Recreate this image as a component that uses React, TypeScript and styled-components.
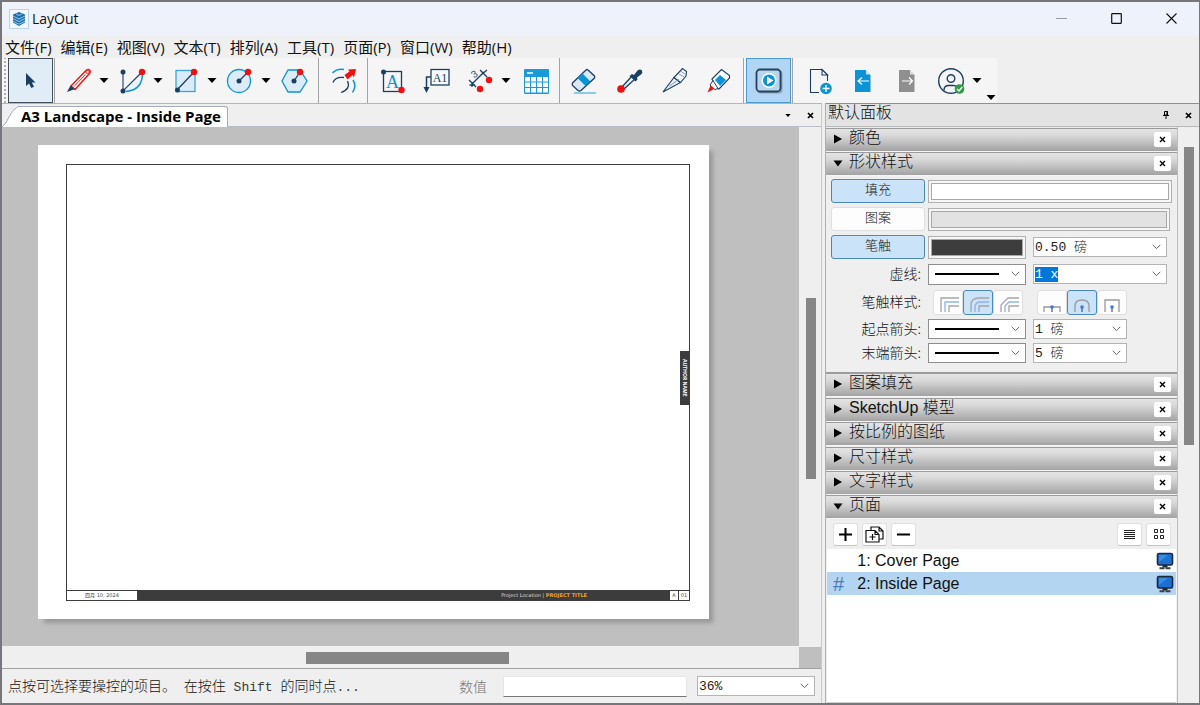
import React, { useEffect, useRef } from "react";
import styled, { createGlobalStyle, css } from "styled-components";

const NAVY = "#1b3f63";
const BLUE = "#0a94d6";
const RED = "#f01010";
const PALE = "#dcebf8";
const UI = `"Open Sans", "Noto Sans CJK SC", sans-serif`;
const SONG = `"Liberation Mono", "Noto Sans CJK SC", monospace`;
const ARIAL = `"Liberation Sans", "Noto Sans CJK SC", sans-serif`;

const GlobalStyle = createGlobalStyle`
  *, *::before, *::after { box-sizing: border-box; }
  body { margin: 0; background: #efefef; color: #111; font-family: ${UI}; font-size: 14px; }
  button, input, select { font: inherit; color: inherit; margin: 0; padding: 0; border-radius: 0; }
  button { cursor: default; border: 0; background: none; }
  svg { display: block; flex: none; }
  ul { list-style: none; margin: 0; padding: 0; }
  h2 { margin: 0; font-size: 16px; font-weight: 300; }
`;

/* ---------- window frame ---------- */

const Window = styled.div`
  min-height: 100vh;
  display: flex;
  flex-direction: column;
  border: 2px solid #77777b;
  border-right-width: 1px;
  background: #efefef;
`;

const TitleBar = styled.header`
  height: 33px;
  display: flex;
  align-items: center;
  padding-left: 7px;
  background: #eef2fa;
`;

const AppTitle = styled.span`
  flex: 1;
  padding-left: 3px;
  font-size: 14px;
  line-height: 20px;
`;

const WindowButton = styled.button`
  width: 55px;
  height: 33px;
  display: flex;
  align-items: center;
  justify-content: center;
`;

const MenuBar = styled.nav`
  height: 23px;
  display: flex;
  align-items: center;
  gap: 9px;
  padding-left: 3px;
  background: #efefef;
`;

const MenuItem = styled.button`
  font-size: 15px;
  line-height: 22px;
  white-space: nowrap;
`;

/* ---------- toolbar ---------- */

const Toolbar = styled.div`
  height: 45px;
  display: flex;
  align-self: flex-start;
  background: #f5f5f5;
`;

const Grip = styled.div`
  width: 6px;
  background: radial-gradient(circle at 2px 2px, #b0b0b0 1px, transparent 1px) 1px 2px / 4px 4px;
`;

const ToolGroup = styled.div<{ $gap?: number; $left?: number; $right?: number; $last?: boolean }>`
  display: flex;
  gap: ${(p) => p.$gap ?? 0}px;
  padding: 0 ${(p) => p.$right ?? 0}px 0 ${(p) => p.$left ?? 0}px;
  border-right: ${(p) => (p.$last ? "0" : "1px solid #a3a3a3")};
`;

const ToolButton = styled.button<{ $state?: "picked" | "active" }>`
  width: 38px;
  height: 45px;
  display: flex;
  align-items: center;
  justify-content: center;
  ${(p) =>
    p.$state &&
    css`
      width: 45px;
      border: 1px solid ${p.$state === "picked" ? "#42505c" : "#4a9ad4"};
      background: ${p.$state === "picked" ? "#e0ecf6" : "#b1d5f2"};
    `}
`;

const Split = styled.div`
  display: flex;
`;

const CaretButton = styled.button`
  width: 12px;
  height: 45px;
  display: flex;
  align-items: center;
  justify-content: center;
`;

const OverflowButton = styled(CaretButton)`
  align-items: flex-end;
  padding-bottom: 3px;
  margin: 0 0 0 2px;
`;

/* ---------- work area ---------- */

const Main = styled.main`
  flex: 1;
  display: grid;
  grid-template-columns: minmax(0, 1fr) 374px;
`;

const Workspace = styled.section`
  display: flex;
  flex-direction: column;
  min-width: 0;
  border-top: 1px solid #b5b5b5;
  border-right: 1px solid #c9c9c9;
  margin-right: 3px;
`;

const TabBar = styled.div`
  height: 23px;
  display: flex;
  align-items: flex-end;
  background: #efefef;
  border-bottom: 1px solid #b9bdc6;
`;

const TabShape = styled.button`
  display: flex;
  align-items: stretch;
  height: 21px;
  margin-bottom: -1px;
`;

const TabLabel = styled.span`
  background: #fff;
  border: 1px solid #a3abc0;
  border-width: 1px 1px 0 0;
  border-radius: 0 3px 0 0;
  padding: 0 6px 0 0;
  font-size: 15px;
  line-height: 18px;
  font-weight: 700;
  color: #000;
  white-space: nowrap;
`;

const TabTools = styled.div`
  flex: 1;
  height: 22px;
  display: flex;
  align-items: center;
  justify-content: flex-end;
`;

const SmallButton = styled.button`
  width: 22px;
  height: 20px;
  display: flex;
  align-items: center;
  justify-content: center;
`;

const CanvasRow = styled.div`
  flex: 1;
  display: flex;
`;

const Canvas = styled.div`
  flex: 1;
  display: flex;
  background: #bfbfbf;
  padding: 18px 90px 27px 36px;
`;

const Paper = styled.div`
  flex: 1;
  display: flex;
  background: #fff;
  padding: 19px 19px 18px 28px;
  box-shadow: 5px 5px 4px -1px #999;
`;

const Sheet = styled.div`
  flex: 1;
  display: flex;
  flex-direction: column;
  border: 1px solid #3d3d3d;
`;

const DrawingArea = styled.div`
  flex: 1;
  display: flex;
  align-items: center;
  justify-content: flex-end;
`;

const AuthorTag = styled.div`
  height: 54px;
  width: 9px;
  display: flex;
  align-items: center;
  justify-content: center;
  writing-mode: vertical-rl;
  background: #3c3c3c;
  color: #fff;
  font: 700 5px/9px "Open Sans", sans-serif;
  white-space: nowrap;
`;

const TitleStrip = styled.div`
  height: 10px;
  display: grid;
  grid-template-columns: 71px minmax(0, 1fr) 9px 10px;
  border-top: 1px solid #3d3d3d;
  font: 5px/8px "DejaVu Sans", "Noto Sans CJK SC", sans-serif;
  text-align: center;
  color: #444;
`;

const StripBar = styled.div`
  background: #3c3c3c;
  color: #ddd;
  padding-right: 83px;
  text-align: right;
`;

const ProjectTitle = styled.b`
  color: #f0a030;
`;

const StripCell = styled.div`
  border-right: 1px solid #3d3d3d;
  &:last-child {
    border-right: 0;
  }
`;

const VerticalTrack = styled.div<{ $pad: string; $width: number }>`
  width: ${(p) => p.$width}px;
  padding: ${(p) => p.$pad};
  background: #efefef;
`;

const VerticalThumb = styled.div<{ $size: number }>`
  height: ${(p) => p.$size}px;
  width: 10px;
  background: #868686;
`;

const HorizontalScroll = styled.div`
  height: 23px;
  display: flex;
  background: #efefef;
  border-bottom: 1px solid #a2a2a2;
`;

const HorizontalTrack = styled.div`
  flex: 1;
  padding: 6px 0 0 304px;
`;

const HorizontalThumb = styled.div`
  width: 203px;
  height: 12px;
  background: #868686;
`;

const ScrollCorner = styled.div`
  width: 22px;
  background: #bfbfbf;
  border-top: 1px solid #efefef;
`;

const StatusBar = styled.footer`
  height: 34px;
  display: flex;
  align-items: center;
  padding: 0 6px 0 6px;
  font-family: ${SONG};
  font-size: 14px;
  font-weight: 300;
  line-height: 20px;
`;

const StatusText = styled.span`
  flex: 1;
  padding-top: 3px;
  white-space: nowrap;
`;

const Half = styled.span`
  font-size: 13px;
  color: #3a3a3a;
  white-space: pre;
`;

const MeasureLabel = styled.label`
  color: #777;
  padding-top: 3px;
  margin-right: 16px;
`;

const MeasureInput = styled.input`
  width: 184px;
  height: 21px;
  border: 1px solid #e6e6e6;
  border-bottom-color: #777;
  background: #fff;
  margin-right: 10px;
`;

/* ---------- form controls ---------- */

const Field = styled.div<{ $width?: number; $height?: number }>`
  position: relative;
  flex: none;
  width: ${(p) => p.$width ?? 134}px;
  height: ${(p) => p.$height ?? 20}px;
`;

const fieldLook = css`
  width: 100%;
  height: 100%;
  display: block;
  appearance: none;
  border: 1px solid #b4b4b4;
  background: #fff;
  padding: 0 20px 0 1px;
  font-family: ${SONG};
  font-size: 13px;
  font-weight: 300;
  color: #222;
  outline: none;
`;

const Select = styled.select<{ $line?: boolean }>`
  ${fieldLook}
  ${(p) =>
    p.$line &&
    css`
      border-color: #8e8e8e;
      background: #fff linear-gradient(#000, #000) 6px 50% / calc(100% - 32px) 2px no-repeat;
    `}
`;

const ComboInput = styled.input`
  ${fieldLook}
  &::selection {
    background: #0078d7;
    color: #fff;
  }
`;

const Chevron = styled.svg`
  position: absolute;
  right: 6px;
  top: 50%;
  margin-top: -3px;
  pointer-events: none;
`;

/* ---------- tray ---------- */

const Tray = styled.aside`
  display: flex;
  flex-direction: column;
  border-left: 1px solid #b0b0b0;
`;

const TrayHeader = styled.div`
  height: 24px;
  display: flex;
  align-items: center;
  padding-left: 2px;
  background: #e3e3e3;
  border-top: 1px solid #8f8f8f;
  border-bottom: 1px solid #b8b8b8;
`;

const TrayTitle = styled.h2`
  flex: 1;
  font-family: ${ARIAL};
  line-height: 20px;
  padding-bottom: 4px;
`;

const TrayBody = styled.div`
  flex: 1;
  display: flex;
`;

const Sections = styled.div`
  flex: 1;
  display: flex;
  flex-direction: column;
  border-right: 1px solid #bdbdbd;
`;

const SectionHeader = styled.div<{ $apart?: boolean }>`
  height: 24px;
  margin-top: ${(p) => (p.$apart ? 1 : 0)}px;
  display: flex;
  align-items: center;
  padding: 0 6px 2px 7px;
  gap: 6px;
  background: linear-gradient(#e4e4e4, #d8d8d8 30%, #a3a3a3);
  border-top: 1px solid #9c9c9c;
  border-bottom: 1px solid #f4f4f4;
`;

const SectionTitle = styled.h2`
  flex: 1;
  font-family: ${ARIAL};
  line-height: 20px;
  padding-bottom: 2px;
`;

const CloseButton = styled.button`
  width: 17px;
  height: 15px;
  display: flex;
  align-items: center;
  justify-content: center;
  background: #fff;
  border-radius: 2px;
`;

const StyleForm = styled.form`
  display: flex;
  flex-direction: column;
  gap: 4px;
  padding: 3px 5px 9px;
  border-bottom: 1px solid #9c9c9c;
`;

const FormRow = styled.div<{ $height?: number }>`
  height: ${(p) => p.$height ?? 24}px;
  display: flex;
  align-items: center;
`;

const ToggleButton = styled.button<{ $on?: boolean }>`
  width: 94px;
  height: 24px;
  margin-right: 3px;
  border: 1px solid ${(p) => (p.$on ? "#4a87bb" : "#dedede")};
  border-radius: 3px;
  background: ${(p) => (p.$on ? "#cbe3f8" : "#fdfdfd")};
  font-family: ${SONG};
  font-size: 13px;
  font-weight: 300;
  line-height: 20px;
`;

const Swatch = styled.button<{ $color: string; $width?: number; $inset?: number }>`
  ${(p) => (p.$width ? `width: ${p.$width}px;` : "flex: 1;")}
  height: 23px;
  margin-right: ${(p) => p.$inset ?? 0}px;
  padding: 2px;
  border: 1px solid #b0b0b0;
  background: #f6f6f6;
  &::before {
    content: "";
    display: block;
    height: 100%;
    border: 1px solid #a8a8a8;
    background: ${(p) => p.$color};
  }
`;

const RowLabel = styled.label`
  width: 94px;
  margin-right: 3px;
  padding: 0 4px 2px 0;
  text-align: right;
  font-family: "Noto Sans CJK SC", sans-serif;
  font-size: 14px;
  font-weight: 300;
  line-height: 20px;
  white-space: nowrap;
`;

const Spacer = styled.div`
  width: 7px;
`;

const Segments = styled.div<{ $left: number }>`
  display: flex;
  margin-left: ${(p) => p.$left}px;
`;

const Segment = styled.button<{ $on?: boolean }>`
  width: 30px;
  height: 25px;
  display: flex;
  align-items: center;
  justify-content: center;
  padding: 2px 0 0 2px;
  border: 1px solid ${(p) => (p.$on ? "#4a87bb" : "#dedede")};
  border-radius: 3px;
  background: ${(p) => (p.$on ? "#cbe3f8" : "#fdfdfd")};
`;

const PageTools = styled.div`
  height: 30px;
  display: flex;
  align-items: center;
  gap: 4px;
  padding: 0 6px 0 7px;
`;

const PageButton = styled.button<{ $push?: boolean }>`
  width: 25px;
  height: 23px;
  display: flex;
  align-items: center;
  justify-content: center;
  background: #fff;
  border: 1px solid #e0e0e0;
  border-bottom-color: #c4c4c4;
  border-radius: 3px;
  margin-left: ${(p) => (p.$push ? "auto" : "0")};
`;

const PageList = styled.ul`
  flex: 1;
  margin: 0 1px;
  background: #fff;
  border-bottom: 1px solid #d0d0d0;
`;

const PageRow = styled.li<{ $selected?: boolean }>`
  height: 23px;
  display: flex;
  align-items: center;
  padding: 0 2px 0 6px;
  font: 16px/22px ${ARIAL};
  background: ${(p) => (p.$selected ? "#b3d5f1" : "#fff")};
`;

const PageMark = styled.span`
  width: 20px;
  color: #4a7cc0;
  font-size: 20px;
`;

const PageNumber = styled.span`
  width: 22px;
  text-align: center;
`;

const PageName = styled.span`
  flex: 1;
`;

/* ---------- drawings ---------- */

const Glyph = ({ children }: { children: React.ReactNode }) => (
  <svg width="36" height="36" viewBox="-18 -18 36 36" fill="none" strokeWidth="1.3" aria-hidden>
    {children}
  </svg>
);

const Dot = ({ x, y, red }: { x: number; y: number; red?: boolean }) => (
  <circle cx={x} cy={y} r={red ? 3.2 : 2.5} fill={red ? RED : NAVY} />
);

const Caret = ({ w = 10, h = 5 }: { w?: number; h?: number }) => (
  <svg width={w} height={h} viewBox="0 0 10 5" aria-hidden>
    <path d="M0.5 0H9.5L5 5Z" fill="#000" />
  </svg>
);

const Cross = ({ size = 7, width = 1.7 }: { size?: number; width?: number }) => (
  <svg width={size} height={size} viewBox="0 0 7 7" aria-hidden>
    <path d="M1 1L6 6M6 1L1 6" stroke="#000" strokeWidth={width} />
  </svg>
);

const Down = () => (
  <Chevron width="9" height="6" viewBox="0 0 9 6" fill="none" aria-hidden>
    <path d="M0.7 0.8L4.5 4.6L8.3 0.8" stroke="#666" strokeWidth="1" />
  </Chevron>
);

const Logo = () => (
  <svg width="20" height="20" viewBox="0 0 20 20" aria-hidden>
    <rect x="0.5" y="0.5" width="19" height="19" fill="#f4f8fc" stroke="#bcd5e8" />
    <path d="M4 5.500L10 3L16 5.500V13.500L10 17L4 13.500Z" fill="#1a6fae" />
    <path
      d="M4 7L10 10L16 7M4 9.6L10 12.6L16 9.6M4 12.2L10 15.2L16 12.2M7 5L10 6.5L13 5"
      fill="none"
      stroke="#b9dcf2"
      strokeWidth="0.8"
    />
  </svg>
);

const SelectIcon = () => (
  <Glyph>
    <path d="M-5 -8V5L-2 2.500L0.300 7L3 5.800L0.800 1.500H4.500Z" fill={NAVY} />
  </Glyph>
);

const PencilIcon = () => (
  <Glyph>
    <path d="M-8 5L7 -10.500Q9 -12.500 10.500 -11Q12 -9.500 10.500 -7.500L-4 8.500Z" fill="#fff" stroke={RED} strokeWidth="1.400" />
    <path d="M-5 5.500L6.500 -6.500" stroke={RED} strokeWidth="0.900" />
    <circle cx="8.500" cy="-9" r="1.600" fill="#fff" stroke={RED} strokeWidth="0.900" />
    <path d="M-12 11L-8.500 4.500L-4 8Z" fill={NAVY} />
  </Glyph>
);

const ArcIcon = () => (
  <Glyph>
    <path d="M9 -9Q9 10 -10 10Z" fill="#eaf3fa" />
    <path d="M9.500 -9Q10 9 -7 10.500" stroke={BLUE} strokeWidth="1.500" />
    <path d="M-10 -9V10L9 -9" stroke={NAVY} strokeWidth="1.100" />
    <Dot x={-10} y={-9} />
    <Dot x={-10} y={10} />
    <Dot x={9} y={-9} red />
  </Glyph>
);

const RectIcon = () => (
  <Glyph>
    <rect x="-11" y="-10.500" width="19" height="21" fill={PALE} stroke="#3aa5dc" />
    <path d="M-10 9L7 -9" stroke={NAVY} />
    <Dot x={-9.5} y={9} />
    <Dot x={7} y={-9} red />
  </Glyph>
);

const CircleIcon = () => (
  <Glyph>
    <circle cx="-2" cy="0" r="11.500" fill={PALE} stroke={BLUE} />
    <path d="M-2 0L7 -9" stroke={NAVY} />
    <Dot x={-2} y={0} />
    <Dot x={7} y={-9} red />
  </Glyph>
);

const PolygonIcon = () => (
  <Glyph>
    <path d="M-13 0L-7 -11H5L12 0L5 11H-7Z" fill={PALE} stroke={BLUE} />
    <path d="M-1 0L5 -9" stroke={NAVY} />
    <Dot x={-1} y={0} />
    <Dot x={5} y={-9} red />
  </Glyph>
);

const OffsetIcon = () => (
  <Glyph>
    <path d="M-11.500 -8Q-7 -12.500 0 -11.500M9 -1Q13 5 8.500 11.500" stroke={BLUE} strokeWidth="1.500" />
    <path d="M-11 1.500Q-9 -4.500 0 -3.500M3.500 0Q7 8 -3 11.500" stroke={NAVY} />
    <path d="M0.500 -6L5.500 -9.500L4 -11.500L12 -12L10 -3.500L8.500 -6L3.500 -1.500Z" fill={RED} />
  </Glyph>
);

const TextIcon = () => (
  <Glyph>
    <rect x="-9.500" y="-9.500" width="18" height="20" stroke={NAVY} />
    <text x="-0.500" y="6.500" textAnchor="middle" fontFamily="Liberation Serif, serif" fontSize="18" fill={BLUE}>
      A
    </text>
    <Dot x={-9.5} y={-9} />
    <Dot x={8.500} y={9} red />
  </Glyph>
);

const LabelIcon = () => (
  <Glyph>
    <path d="M-6 -4H-10.500V7" stroke={NAVY} strokeWidth="1.500" />
    <path d="M-13.500 6H-7.500L-10.500 12Z" fill={NAVY} />
    <rect x="-6" y="-11.500" width="18" height="15.500" fill="#f8fafc" stroke={NAVY} />
    <text x="3" y="0.500" textAnchor="middle" fontFamily="Liberation Serif, serif" fontSize="12" fill={NAVY}>
      A1
    </text>
  </Glyph>
);

const DimensionIcon = () => (
  <Glyph>
    <path d="M-9 3L3 -9M-12 -1L-5 6M-11.500 4H-6M-1 -11L6 -4M0 -6L6 -11M-9 6V1" stroke={NAVY} />
    <text x="-9" y="-3" fontFamily="Liberation Sans, sans-serif" fontSize="10" fill={NAVY} transform="rotate(-35 -7 -6)">
      3
    </text>
    <Dot x={8} y={-1} red />
    <Dot x={-1} y={8} red />
  </Glyph>
);

const TableIcon = () => (
  <Glyph>
    <rect x="-13" y="-12" width="25" height="25" rx="1" fill="#1a9bd8" />
    <path d="M-10 -8H-4" stroke="#fff" strokeWidth="1.500" />
    {[0, 1, 2].map((r) =>
      [0, 1, 2, 3].map((c) => (
        <rect key={`${r}${c}`} x={-12 + c * 6} y={-4 + r * 5.500} width="5" height="4.500" fill="#fff" />
      )),
    )}
  </Glyph>
);

const EraserIcon = () => (
  <Glyph>
    <path d="M-10 12H12" stroke="#4fb6e0" />
    <path d="M-11.500 2L2 -11Q3 -12 4 -11L10.500 -5Q11 -4 10.500 -3L-3 9.500Q-4.500 10.500 -6 9.500L-11.500 4.500Q-12 3 -11.500 2Z" fill="#dde8f5" stroke={NAVY} />
    <path d="M-6.500 -3L1.500 5L6.500 0.500L-1.500 -7.500Z" fill={BLUE} />
  </Glyph>
);

const DropperIcon = () => (
  <Glyph>
    <path d="M-7 6L3 -5L6 -2L-5 8Z" fill="#e6eef6" stroke={NAVY} />
    <path d="M0.500 -5L3 -7L5 -6L8.500 -10.500Q11 -12.500 13 -10.500Q14 -8.500 12 -6.500L8 -3.500L8.500 -1.500L6.500 0.500Z" fill={NAVY} />
    <circle cx="-8" cy="8" r="3.800" fill={RED} />
  </Glyph>
);

const KnifeIcon = () => (
  <Glyph>
    <path d="M-11 11L0 -3.500L6.500 1.500Z" fill="#e8eff6" stroke={NAVY} strokeWidth="1.100" />
    <path d="M0 -3.500L8.500 -12.500L12.500 -9.500L12 -5L6.500 1.500Z" fill="#f5f8fb" stroke={NAVY} strokeWidth="1.100" />
    <path d="M-5 5.500L5 -2M5 -7L10.500 -4M7 -9.500L11.500 -6.500" stroke="#7d95ae" strokeWidth="0.900" />
  </Glyph>
);

const StyleIcon = () => (
  <Glyph>
    <path d="M-7 -2L2.500 -11.500L10.500 -5.500V-3L0 8L-3 7Z" fill="#fff" stroke={NAVY} strokeWidth="1.100" />
    <path d="M-4 -1L1 -6L7 -1L1 5Z" fill={BLUE} />
    <path d="M-6 -0.500L-9 4L-4 8.500L-1 7.500Z" fill="#fff" stroke={NAVY} strokeWidth="1" />
    <path d="M-8.500 4.500L-11.500 11.500L-5 8Z" fill={RED} />
  </Glyph>
);

const PresentIcon = () => (
  <Glyph>
    <rect x="-12" y="-11" width="25.500" height="23.500" rx="3.500" fill="#8ba3b8" />
    <rect x="-12.500" y="-11.500" width="24" height="22" rx="3.500" fill="#b7d5ec" stroke="#24425f" strokeWidth="1.800" />
    <circle cx="0" cy="-0.500" r="7.500" fill="#fff" />
    <circle cx="0" cy="-0.500" r="6" fill={BLUE} />
    <path d="M-2 -4.500V3.500L4.500 -0.500Z" fill="#fff" />
  </Glyph>
);

const AddPageIcon = () => (
  <Glyph>
    <path d="M-1 11.500H-9.500V-11.500H2L7.500 -6V0" stroke={NAVY} strokeWidth="1.100" />
    <path d="M2 -11.500V-6H7.500Z" fill="#fff" stroke={NAVY} strokeWidth="1.100" />
    <circle cx="6" cy="7.500" r="5.800" fill={BLUE} />
    <path d="M2.500 7.500H9.500M6 4V11" stroke="#fff" />
  </Glyph>
);

const TurnIcon = ({ color, back }: { color: string; back?: boolean }) => (
  <Glyph>
    <path d="M-9 -11H1.500L6.500 -6V11H-9Z" fill={color} />
    <path d="M2 -11V-6.500H6.500Z" fill="#dcdcdc" />
    <path d={back ? "M5 0H-6M-2 -3.500L-6 0L-2 3.500" : "M-6 0H4.500M1 -3.500L4.500 0L1 3.500"} stroke="#fff" strokeWidth="1.200" />
  </Glyph>
);

const UserIcon = () => (
  <Glyph>
    <circle cx="-1" cy="0" r="12.300" stroke={NAVY} strokeWidth="1.400" />
    <circle cx="-1" cy="-2.500" r="3.800" stroke={NAVY} strokeWidth="1.400" />
    <path d="M-8 9.500Q-8 4.500 -3.500 4.500H1.500Q4 4.500 5 6" stroke={NAVY} strokeWidth="1.400" />
    <circle cx="7.500" cy="8" r="4.800" fill="#2f9a48" />
    <path d="M5 8L7 10L10.200 6" stroke="#fff" strokeWidth="1.400" />
  </Glyph>
);

const Pin = () => (
  <svg width="6" height="8" viewBox="0 0 6 8" fill="none" aria-hidden>
    <path d="M1.500 0.500H4.500V4H1.500ZM0 4.500H6M3 4V8M4 0V4" stroke="#000" />
  </svg>
);

const JoinIcon = ({ kind }: { kind: "miter" | "round" | "bevel" }) => {
  const outer = {
    miter: "M3 18V4H21",
    round: "M3 18V11Q3 4 11 4H21",
    bevel: "M3 18V11L10 4H21",
  }[kind];
  const mid = {
    miter: "M7 18V8H21",
    round: "M7 18V13Q7 8 13 8H21",
    bevel: "M7 18V12L11 8H21",
  }[kind];
  return (
    <svg width="22" height="19" viewBox="0 0 22 19" fill="none" aria-hidden>
      <path d={outer} stroke="#a5a5a5" strokeWidth="1.300" />
      <path d={mid} stroke="#8eb2ea" strokeWidth="1.300" />
      <path d="M11 18V12H21" stroke="#a5a5a5" strokeWidth="1.300" />
    </svg>
  );
};

const CapIcon = ({ kind }: { kind: "flat" | "round" | "square" }) => {
  const outer = {
    flat: "M2 18V13H18V18",
    round: "M3 18V12Q3 6 10 6Q17 6 17 12V18",
    square: "M3 18V6H17V18",
  }[kind];
  return (
    <svg width="22" height="19" viewBox="0 0 22 19" fill="none" aria-hidden>
      <path d={outer} stroke="#999" strokeWidth="1.300" />
      <path d="M10 13V18" stroke="#333" />
      <circle cx="10" cy="13" r="1.800" fill="#3a7bd5" />
    </svg>
  );
};

const Monitor = () => (
  <svg width="18" height="18" viewBox="0 0 18 18" aria-label="演示">
    <rect x="1.500" y="1.500" width="15" height="11.500" rx="1.500" fill="#1d6fd0" stroke="#1c2a3c" strokeWidth="1.600" />
    <path d="M3 10L12 3H3Z" fill="#3d8be6" />
    <path d="M6.500 13H11.500V15.500H6.500Z" fill="#1c2a3c" />
    <path d="M3.500 16.200H14.500" stroke="#3d3d42" strokeWidth="2" strokeDasharray="5 1" />
  </svg>
);

/* ---------- pieces ---------- */

const Tool = ({ label, children }: { label: string; children: React.ReactNode }) => (
  <ToolButton aria-label={label}>{children}</ToolButton>
);

const SplitTool = ({ label, children }: { label: string; children: React.ReactNode }) => (
  <Split>
    <Tool label={label}>{children}</Tool>
    <CaretButton aria-label={`${label} 选项`}>
      <Caret />
    </CaretButton>
  </Split>
);

const Section = ({ title, open, apart }: { title: string; open?: boolean; apart?: boolean }) => (
  <SectionHeader $apart={apart}>
    <svg width="10" height="10" viewBox="0 0 10 10" aria-hidden>
      <path d={open ? "M0.500 2.500H9.500L5 8.500Z" : "M1 0.500L9 5L1 9.500Z"} fill="#000" />
    </svg>
    <SectionTitle>{title}</SectionTitle>
    <CloseButton aria-label={`关闭 ${title}`}>
      <Cross size={7} width={1.4} />
    </CloseButton>
  </SectionHeader>
);

const LineSelect = ({ id, height }: { id: string; height?: number }) => (
  <Field $width={98} $height={height}>
    <Select $line id={id}>
      <option value="solid"></option>
    </Select>
    <Down />
  </Field>
);

const ValueSelect = ({ label, value, width }: { label: string; value: string; width?: number }) => (
  <Field $width={width}>
    <Select aria-label={label}>
      <option>{value}</option>
    </Select>
    <Down />
  </Field>
);

const ScaleCombo = () => {
  const ref = useRef<HTMLInputElement>(null);
  useEffect(() => {
    ref.current?.focus();
    ref.current?.select();
  }, []);
  return (
    <Field>
      <ComboInput ref={ref} aria-label="虚线比例" defaultValue="1 x" />
      <Down />
    </Field>
  );
};

const menus = ["文件(F)", "编辑(E)", "视图(V)", "文本(T)", "排列(A)", "工具(T)", "页面(P)", "窗口(W)", "帮助(H)"];
const closedSections = ["图案填充", "SketchUp 模型", "按比例的图纸", "尺寸样式", "文字样式"];
const pages = [
  { n: 1, name: "Cover Page" },
  { n: 2, name: "Inside Page", selected: true },
];

export default function App() {
  return (
    <Window>
      <GlobalStyle />
      <TitleBar>
        <Logo />
        <AppTitle>LayOut</AppTitle>
        <WindowButton aria-label="最小化">
          <svg width="11" height="11" viewBox="0 0 11 11">
            <path d="M0 5.500H11" stroke="#9a9ea8" />
          </svg>
        </WindowButton>
        <WindowButton aria-label="最大化">
          <svg width="11" height="11" viewBox="0 0 11 11">
            <rect x="0.700" y="0.700" width="9.600" height="9.600" rx="0.500" fill="none" stroke="#111" strokeWidth="1.200" />
          </svg>
        </WindowButton>
        <WindowButton aria-label="关闭">
          <svg width="11" height="11" viewBox="0 0 11 11">
            <path d="M0.500 0.500L10.500 10.500M10.500 0.500L0.500 10.500" stroke="#111" strokeWidth="1.100" />
          </svg>
        </WindowButton>
      </TitleBar>

      <MenuBar>
        {menus.map((m) => (
          <MenuItem key={m}>{m}</MenuItem>
        ))}
      </MenuBar>

      <Toolbar role="toolbar">
        <Grip />
        <ToolGroup $right={1}>
          <ToolButton $state="picked" aria-label="选择">
            <SelectIcon />
          </ToolButton>
        </ToolGroup>
        <ToolGroup $gap={4} $left={5} $right={4}>
          <SplitTool label="线条"><PencilIcon /></SplitTool>
          <SplitTool label="圆弧"><ArcIcon /></SplitTool>
          <SplitTool label="矩形"><RectIcon /></SplitTool>
          <SplitTool label="圆"><CircleIcon /></SplitTool>
          <Tool label="多边形"><PolygonIcon /></Tool>
        </ToolGroup>
        <ToolGroup $left={6} $right={4}>
          <Tool label="偏移"><OffsetIcon /></Tool>
        </ToolGroup>
        <ToolGroup $gap={6} $left={6} $right={3}>
          <Tool label="文本"><TextIcon /></Tool>
          <Tool label="标签"><LabelIcon /></Tool>
          <SplitTool label="尺寸"><DimensionIcon /></SplitTool>
          <Tool label="表格"><TableIcon /></Tool>
        </ToolGroup>
        <ToolGroup $gap={7} $left={5} $right={5}>
          <Tool label="擦除"><EraserIcon /></Tool>
          <Tool label="样式"><DropperIcon /></Tool>
          <Tool label="分割"><KnifeIcon /></Tool>
          <Tool label="合并"><StyleIcon /></Tool>
        </ToolGroup>
        <ToolGroup $left={2} $right={1}>
          <ToolButton $state="active" aria-label="开始演示">
            <PresentIcon />
          </ToolButton>
        </ToolGroup>
        <ToolGroup $gap={6} $left={8} $last>
          <Tool label="添加页面"><AddPageIcon /></Tool>
          <Tool label="上一页"><TurnIcon color={BLUE} back /></Tool>
          <Tool label="下一页"><TurnIcon color="#8f8f8f" /></Tool>
          <SplitTool label="帐户"><UserIcon /></SplitTool>
        </ToolGroup>
        <OverflowButton aria-label="更多工具">
          <Caret />
        </OverflowButton>
      </Toolbar>

      <Main>
        <Workspace>
          <TabBar>
            <TabShape>
              <svg width="19" height="21" viewBox="0 0 19 21" aria-hidden>
                <path d="M0 21Q4 18 7 11T16 0.500H19V21Z" fill="#fff" />
                <path d="M0 21Q4 18 7 11T16 0.500H19" fill="none" stroke="#a3abc0" />
              </svg>
              <TabLabel>A3 Landscape - Inside Page</TabLabel>
            </TabShape>
            <TabTools>
              <SmallButton aria-label="文档列表">
                <Caret w={6} h={3} />
              </SmallButton>
              <SmallButton aria-label="关闭文档">
                <Cross />
              </SmallButton>
            </TabTools>
          </TabBar>
          <CanvasRow>
            <Canvas>
              <Paper>
                <Sheet>
                  <DrawingArea>
                    <AuthorTag>AUTHOR NAME</AuthorTag>
                  </DrawingArea>
                  <TitleStrip>
                    <StripCell>四月 10, 2024</StripCell>
                    <StripBar>
                      Project Location | <ProjectTitle>PROJECT TITLE</ProjectTitle>
                    </StripBar>
                    <StripCell>A</StripCell>
                    <StripCell>01</StripCell>
                  </TitleStrip>
                </Sheet>
              </Paper>
            </Canvas>
            <VerticalTrack $width={22} $pad="171px 0 0 7px">
              <VerticalThumb $size={181} />
            </VerticalTrack>
          </CanvasRow>
          <HorizontalScroll>
            <HorizontalTrack>
              <HorizontalThumb />
            </HorizontalTrack>
            <ScrollCorner />
          </HorizontalScroll>
          <StatusBar>
            <StatusText>
              点按可选择要操控的项目。<Half> </Half>在按住<Half> Shift </Half>的同时点<Half>...</Half>
            </StatusText>
            <MeasureLabel htmlFor="measure">数值</MeasureLabel>
            <MeasureInput id="measure" />
            <ValueSelect label="缩放" value="36%" width={118} />
          </StatusBar>
        </Workspace>

        <Tray>
          <TrayHeader>
            <TrayTitle>默认面板</TrayTitle>
            <SmallButton aria-label="固定">
              <Pin />
            </SmallButton>
            <SmallButton aria-label="关闭面板">
              <Cross />
            </SmallButton>
          </TrayHeader>
          <TrayBody>
            <Sections>
              <Section title="颜色" apart />
              <Section title="形状样式" open />
              <StyleForm onSubmit={(e) => e.preventDefault()}>
                <FormRow>
                  <ToggleButton type="button" $on>填充</ToggleButton>
                  <Swatch type="button" aria-label="填充颜色" $color="#fff" />
                </FormRow>
                <FormRow>
                  <ToggleButton type="button">图案</ToggleButton>
                  <Swatch type="button" aria-label="图案样本" $color="#e2e2e2" $inset={2} />
                </FormRow>
                <FormRow>
                  <ToggleButton type="button" $on>笔触</ToggleButton>
                  <Swatch type="button" aria-label="笔触颜色" $color="#3d3d3d" $width={98} $inset={7} />
                  <ValueSelect label="笔触宽度" value="0.50 磅" />
                </FormRow>
                <FormRow $height={22}>
                  <RowLabel htmlFor="dash">虚线:</RowLabel>
                  <LineSelect id="dash" height={21} />
                  <Spacer />
                  <ScaleCombo />
                </FormRow>
                <FormRow $height={26}>
                  <RowLabel as="span">笔触样式:</RowLabel>
                  <Segments $left={5}>
                    <Segment type="button" aria-label="斜接"><JoinIcon kind="miter" /></Segment>
                    <Segment type="button" aria-label="圆角" $on><JoinIcon kind="round" /></Segment>
                    <Segment type="button" aria-label="斜角"><JoinIcon kind="bevel" /></Segment>
                  </Segments>
                  <Segments $left={14}>
                    <Segment type="button" aria-label="平头"><CapIcon kind="flat" /></Segment>
                    <Segment type="button" aria-label="圆头" $on><CapIcon kind="round" /></Segment>
                    <Segment type="button" aria-label="方头"><CapIcon kind="square" /></Segment>
                  </Segments>
                </FormRow>
                <FormRow $height={20}>
                  <RowLabel htmlFor="start">起点箭头:</RowLabel>
                  <LineSelect id="start" />
                  <Spacer />
                  <ValueSelect label="起点箭头大小" value="1 磅" width={94} />
                </FormRow>
                <FormRow $height={20}>
                  <RowLabel htmlFor="end">末端箭头:</RowLabel>
                  <LineSelect id="end" />
                  <Spacer />
                  <ValueSelect label="末端箭头大小" value="5 磅" width={94} />
                </FormRow>
              </StyleForm>
              {closedSections.map((title, i) => (
                <Section key={title} title={title} apart={i % 2 === 1} />
              ))}
              <Section title="页面" open />
              <PageTools>
                <PageButton aria-label="添加">
                  <svg width="13" height="13" viewBox="0 0 13 13">
                    <path d="M6.500 0V13M0 6.500H13" stroke="#000" strokeWidth="2" />
                  </svg>
                </PageButton>
                <PageButton aria-label="复制">
                  <svg width="19" height="17" viewBox="0 0 19 17" fill="none" stroke="#111" strokeWidth="1.200">
                    <path d="M6 4V1H14L18 5V13H14M14 1V5H18" />
                    <path d="M1 4.500H10L14 8.500V16H1ZM10 4.500V8.500H14M7.500 8V14M4.500 11H10.500" />
                  </svg>
                </PageButton>
                <PageButton aria-label="删除">
                  <svg width="13" height="13" viewBox="0 0 13 13">
                    <path d="M0 6.500H13" stroke="#000" strokeWidth="2" />
                  </svg>
                </PageButton>
                <PageButton aria-label="列表视图" $push>
                  <svg width="11" height="9" viewBox="0 0 11 9">
                    <path d="M0 0.500H11M0 2.500H11M0 4.500H11M0 6.500H11M0 8.500H11" stroke="#222" />
                  </svg>
                </PageButton>
                <PageButton aria-label="缩略图视图">
                  <svg width="10" height="10" viewBox="0 0 10 10" fill="none" stroke="#222">
                    <path d="M0.500 0.500H3.500V3.500H0.500ZM6.500 0.500H9.500V3.500H6.500ZM0.500 6.500H3.500V9.500H0.500ZM6.500 6.500H9.500V9.500H6.500Z" />
                  </svg>
                </PageButton>
              </PageTools>
              <PageList>
                {pages.map((p) => (
                  <PageRow key={p.n} $selected={p.selected}>
                    <PageMark>{p.selected ? "#" : ""}</PageMark>
                    <PageNumber>{p.n}:</PageNumber>
                    <PageName>{p.name}</PageName>
                    <Monitor />
                  </PageRow>
                ))}
              </PageList>
            </Sections>
            <VerticalTrack $width={21} $pad="20px 0 0 6px">
              <VerticalThumb $size={298} />
            </VerticalTrack>
          </TrayBody>
        </Tray>
      </Main>
    </Window>
  );
}
